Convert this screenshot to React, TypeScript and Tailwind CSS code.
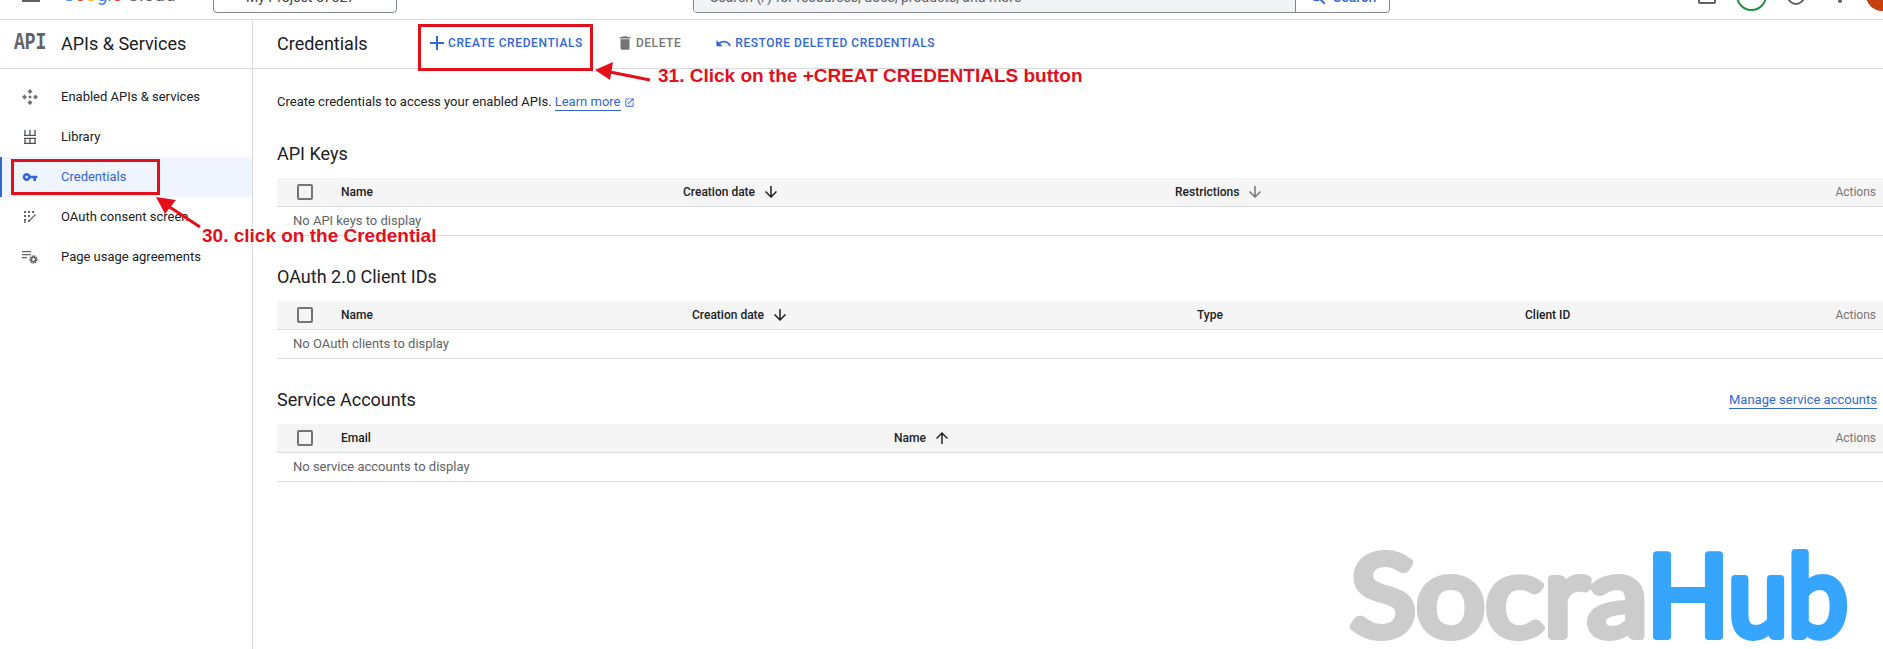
import { ReactNode } from "react";

const DOWN = "M20 12l-1.41-1.41L13 16.17V4h-2v12.17l-5.58-5.59L4 12l8 8 8-8z";
const UP = "M4 12l1.41 1.41L11 7.83V20h2V7.83l5.58 5.59L20 12l-8-8-8 8z";

const Arrow = ({ d, className }: { d: string; className: string }) => (
  <svg viewBox="0 0 24 24" className={`ml-[7px] size-[18px] ${className}`} fill="currentColor">
    <path d={d} />
  </svg>
);

const EnabledIcon = () => (
  <svg viewBox="0 0 16 16" className="size-[16px]" fill="#6f7377">
    <path d="M8 0l2.500 2.500L8 5 5.500 2.500zM8 11l2.500 2.500L8 16l-2.500-2.500zM2.500 5.500L5 8l-2.500 2.500L0 8zM13.500 5.500L16 8l-2.500 2.500L11 8z" />
    <circle cx="8" cy="8" r="1.500" />
  </svg>
);

const LibraryIcon = () => (
  <svg viewBox="0 0 12 14" className="h-[14px] w-[12px]" fill="none" stroke="#4f5358" strokeWidth="1.300">
    <path d="M0 5.400h12M0 8.400h12M0 13.400h12M1 0v5M6 0v5M11 0v5M1 8.500v5M6 8.500v5M11 8.500v5" />
  </svg>
);

const KeyIcon = () => (
  <svg viewBox="0 0 24 24" className="size-[16px]" fill="#3367d6">
    <path d="M12.650 10C11.830 7.670 9.610 6 7 6c-3.310 0-6 2.690-6 6s2.690 6 6 6c2.610 0 4.830-1.670 5.650-4H17v4h4v-4h2v-4H12.650zM7 14c-1.100 0-2-.900-2-2s.900-2 2-2 2 .900 2 2-.900 2-2 2z" />
  </svg>
);

const OauthIcon = () => (
  <svg viewBox="0 0 12 12" className="size-[12px]" fill="#5f6368">
    <path d="M0 0h2v2H0zM4 0h2v2H4zM8 0h2v2H8zM0 4h2v2H0zM4 4h2v2H4zM0 8h2v2H0zM0 10.500h2V12H0zM4 9h2v2H4z" />
    <path d="M5.500 9.500L11.500 3.500" stroke="#5f6368" strokeWidth="1.200" />
  </svg>
);

const UsageIcon = () => (
  <svg viewBox="0 0 16 13" className="h-[13px] w-[16px]">
    <path d="M0 .700h9M0 3.700h9M0 6.700h5" stroke="#5f6368" strokeWidth="1.200" />
    <circle cx="11.500" cy="8.500" r="3.400" fill="none" stroke="#5f6368" strokeWidth="1.600" strokeDasharray="1.500 .800" />
    <circle cx="11.500" cy="8.500" r="2.200" fill="none" stroke="#5f6368" strokeWidth="1.500" />
  </svg>
);

const navItems: { label: string; icon: ReactNode; active?: boolean }[] = [
  { label: "Enabled APIs & services", icon: <EnabledIcon /> },
  { label: "Library", icon: <LibraryIcon /> },
  { label: "Credentials", icon: <KeyIcon />, active: true },
  { label: "OAuth consent screen", icon: <OauthIcon /> },
  { label: "Page usage agreements", icon: <UsageIcon /> },
];

const TopBar = () => (
  <header className="flex h-[20px] items-end overflow-hidden border-b border-[#dadce0] bg-white">
    <div className="mb-[17px] ml-[22px] h-[2px] w-[18px] shrink-0 bg-[#5f6368]" />
    <div className="mb-[12px] ml-[22px] w-[117px] shrink-0 text-[19px] leading-[24px] whitespace-nowrap text-[#5f6368]">
      <span className="text-[#4285f4]">G</span>
      <span className="text-[#ea4335]">o</span>
      <span className="text-[#fbbc05]">o</span>
      <span className="text-[#4285f4]">g</span>
      <span className="text-[#34a853]">l</span>
      <span className="text-[#ea4335]">e</span> Cloud
    </div>
    <div className="mb-[6px] ml-[34px] flex h-[36px] w-[184px] shrink-0 items-center rounded-b-[4px] border border-[#80868b] pl-[14px] text-[14px] text-[#3c4043]">
      <div className="mt-[-2px] size-[5px] rounded-full bg-[#3c4043]" />
      <span className="mt-[4px] ml-[13px] whitespace-nowrap">My Project 57327</span>
    </div>
    <div className="mb-[6px] ml-[296px] flex h-[36px] w-[697px] shrink-0 overflow-hidden rounded-b-[4px] border border-[#80868b] text-[14px]">
      <div className="flex w-[602px] items-center border-r border-[#80868b] bg-[#f1f3f4] pl-[16px] text-[#5f6368]">
        <span className="mt-[4px] whitespace-nowrap">Search (/) for resources, docs, products, and more</span>
      </div>
      <div className="flex flex-1 items-center justify-center gap-[6px] font-medium text-[#3367d6]">
        <svg viewBox="0 0 24 24" className="mt-[4px] size-[18px]" fill="none" stroke="currentColor" strokeWidth="2.500">
          <circle cx="10" cy="10" r="6.500" />
          <path d="M15 15l6 6" />
        </svg>
        <span className="mt-[4px] whitespace-nowrap">Search</span>
      </div>
    </div>
    <div className="mb-[15px] ml-[308px] h-[14px] w-[18px] shrink-0 rounded-[2px] border-2 border-[#5f6368]" />
    <div className="mb-[8px] ml-[20px] size-[31px] shrink-0 rounded-full border-2 border-[#1e8e3e]" />
    <div className="mb-[14px] ml-[20px] size-[18px] shrink-0 rounded-full border-2 border-[#5f6368]" />
    <div className="mb-[16px] ml-[33px] size-[4px] shrink-0 rounded-full bg-[#5f6368]" />
    <div className="mb-[8px] ml-[24px] size-[32px] shrink-0 rounded-full bg-[#c5400f]" />
  </header>
);

const Sidebar = () => (
  <aside className="w-[253px] shrink-0 border-r border-[#dadce0]">
    <div className="flex h-[49px] items-center border-b border-[#dadce0] pb-[2px]">
      <span className="ml-[14px] w-[47px] scale-y-[1.3] font-['Liberation_Mono',monospace] text-[18px] font-bold text-[#5f6368]">
        API
      </span>
      <span className="text-[18px] text-[#202124]">APIs &amp; Services</span>
    </div>
    <nav className="pt-[8px]">
      {navItems.map((item) => (
        <div
          key={item.label}
          className={
            item.active
              ? "flex h-[40px] items-center border-l-2 border-[#3367d6] bg-[#eff4fd] text-[13px] text-[#3367d6]"
              : "flex h-[40px] items-center border-l-2 border-transparent text-[13px] text-[#202124]"
          }
        >
          <div className="flex w-[59px] justify-center">
            <div className="ml-[-3px] flex w-[16px] justify-center">{item.icon}</div>
          </div>
          <span>{item.label}</span>
        </div>
      ))}
    </nav>
  </aside>
);

const TableHead = ({ children }: { children: ReactNode }) => (
  <div className="flex h-[29px] items-center border-b border-[#dadce0] bg-[#f5f5f5] text-[12px] font-medium text-[#202124]">
    <div className="w-[64px] pl-[20px]">
      <div className="size-[16px] rounded-[2px] border-2 border-[#757575]" />
    </div>
    {children}
    <span className="pr-[7px] font-normal text-[#757575]">Actions</span>
  </div>
);

const EmptyRow = ({ text }: { text: string }) => (
  <div className="flex h-[29px] items-center border-b border-[#dadce0] pl-[16px] text-[13px] text-[#5f6368]">{text}</div>
);

const SectionTitle = ({ title, link }: { title: string; link?: string }) => (
  <div className="mb-[7px] flex h-[35px] items-center justify-between">
    <h2 className="text-[18px] text-[#202124]">{title}</h2>
    {link && (
      <a className="mr-[6px] border-b border-[#3367d6] text-[13px] leading-[17px] text-[#3367d6]">{link}</a>
    )}
  </div>
);

const SocraHub = () => (
  <svg viewBox="0 0 510 110" className="absolute top-[540px] left-[1344px] h-[110px] w-[510px]">
    <g fontFamily="Lato, sans-serif" fontSize="112" strokeWidth="8" strokeLinejoin="round">
      <text x="6" y="96" textLength="298" lengthAdjust="spacingAndGlyphs" fill="#cccccc" stroke="#cccccc">
        Socra
      </text>
      <text x="303" y="96" textLength="201" lengthAdjust="spacingAndGlyphs" fill="#36a5fd" stroke="#36a5fd">
        Hub
      </text>
    </g>
  </svg>
);

const Annotations = () => (
  <>
    <div className="absolute top-[24px] left-[418px] h-[47px] w-[175px] border-[3px] border-[#e3101c]" />
    <div className="absolute top-[159px] left-[11px] h-[36px] w-[149px] border-[3px] border-[#e3101c]" />
    <svg className="pointer-events-none absolute inset-0 h-[649px] w-[1883px]" viewBox="0 0 1883 649" fill="#e3101c">
      <path d="M650 80L610 72" stroke="#e3101c" strokeWidth="3" />
      <path d="M595 70L613 62L610 80Z" />
      <path d="M200 227L165 204" stroke="#e3101c" strokeWidth="3" />
      <path d="M156 197L176 200L165 214Z" />
    </svg>
    <span className="absolute top-[65px] left-[658px] font-['Liberation_Sans',sans-serif] text-[19px] leading-[22px] font-bold whitespace-nowrap text-[#e3101c]">
      31. Click on the +CREAT CREDENTIALS button
    </span>
    <span className="absolute top-[225px] left-[202px] font-['Liberation_Sans',sans-serif] text-[19px] leading-[22px] font-bold whitespace-nowrap text-[#e3101c]">
      30. click on the Credential
    </span>
  </>
);

export default function App() {
  return (
    <div className="relative h-[649px] w-[1883px] overflow-hidden bg-white font-[Roboto,sans-serif]">
      <TopBar />
      <div className="flex h-[629px]">
        <Sidebar />
        <main className="flex-1">
          <div className="flex h-[49px] items-center border-b border-[#dadce0] pb-[2px] pl-[24px]">
            <h1 className="w-[153px] text-[18px] text-[#202124]">Credentials</h1>
            <button className="flex items-center text-[12px] font-medium tracking-[0.6px] text-[#3367d6]">
              <svg viewBox="0 0 14 14" className="size-[14px]" stroke="currentColor" strokeWidth="2">
                <path d="M7 0v14M0 7h14" />
              </svg>
              <span className="ml-[4px]">CREATE CREDENTIALS</span>
            </button>
            <button className="ml-[33px] flex items-center text-[12px] font-medium tracking-[0.55px] text-[#757575]">
              <svg viewBox="0 0 24 24" className="size-[18px]" fill="currentColor">
                <path d="M6 19c0 1.100.9 2 2 2h8c1.100 0 2-.9 2-2V7H6v12zM19 4h-3.500l-1-1h-5l-1 1H5v2h14V4z" />
              </svg>
              <span className="ml-[2px]">DELETE</span>
            </button>
            <button className="ml-[34px] flex items-center text-[12px] font-medium tracking-[0.55px] text-[#3367d6]">
              <svg viewBox="0 0 24 24" className="size-[17px]" fill="currentColor">
                <path d="M12.500 8c-2.650 0-5.050.99-6.900 2.600L2 7v9h9l-3.620-3.620c1.390-1.160 3.160-1.880 5.120-1.880 3.540 0 6.550 2.310 7.600 5.500l2.370-.78C21.080 11.030 17.150 8 12.500 8z" />
              </svg>
              <span className="ml-[3px]">RESTORE DELETED CREDENTIALS</span>
            </button>
          </div>

          <div className="pl-[24px]">
            <p className="mt-[23px] flex h-[20px] items-center text-[13px] text-[#202124]">
              Create credentials to access your enabled APIs.
              <a className="ml-[3px] border-b border-[#3367d6] leading-[16px] text-[#3367d6]">Learn more</a>
              <svg viewBox="0 0 24 24" className="ml-[3px] size-[11px]" fill="#3367d6">
                <path d="M19 19H5V5h7V3H5c-1.110 0-2 .9-2 2v14c0 1.100.89 2 2 2h14c1.100 0 2-.9 2-2v-7h-2v7zM14 3v2h3.590l-9.830 9.830 1.410 1.410L19 6.410V10h2V3h-7z" />
              </svg>
            </p>

            <section className="mt-[24px]">
              <SectionTitle title="API Keys" />
              <TableHead>
                <span className="w-[342px]">Name</span>
                <span className="flex w-[492px] items-center">
                  Creation date
                  <Arrow d={DOWN} className="text-[#202124]" />
                </span>
                <span className="flex flex-1 items-center">
                  Restrictions
                  <Arrow d={DOWN} className="text-[#757575]" />
                </span>
              </TableHead>
              <EmptyRow text="No API keys to display" />
            </section>

            <section className="mt-[23px]">
              <SectionTitle title="OAuth 2.0 Client IDs" />
              <TableHead>
                <span className="w-[351px]">Name</span>
                <span className="flex w-[505px] items-center">
                  Creation date
                  <Arrow d={DOWN} className="text-[#202124]" />
                </span>
                <span className="w-[328px]">Type</span>
                <span className="flex-1">Client ID</span>
              </TableHead>
              <EmptyRow text="No OAuth clients to display" />
            </section>

            <section className="mt-[23px]">
              <SectionTitle title="Service Accounts" link="Manage service accounts" />
              <TableHead>
                <span className="w-[553px]">Email</span>
                <span className="flex flex-1 items-center">
                  Name
                  <Arrow d={UP} className="text-[#202124]" />
                </span>
              </TableHead>
              <EmptyRow text="No service accounts to display" />
            </section>
          </div>
        </main>
      </div>
      <SocraHub />
      <Annotations />
    </div>
  );
}
